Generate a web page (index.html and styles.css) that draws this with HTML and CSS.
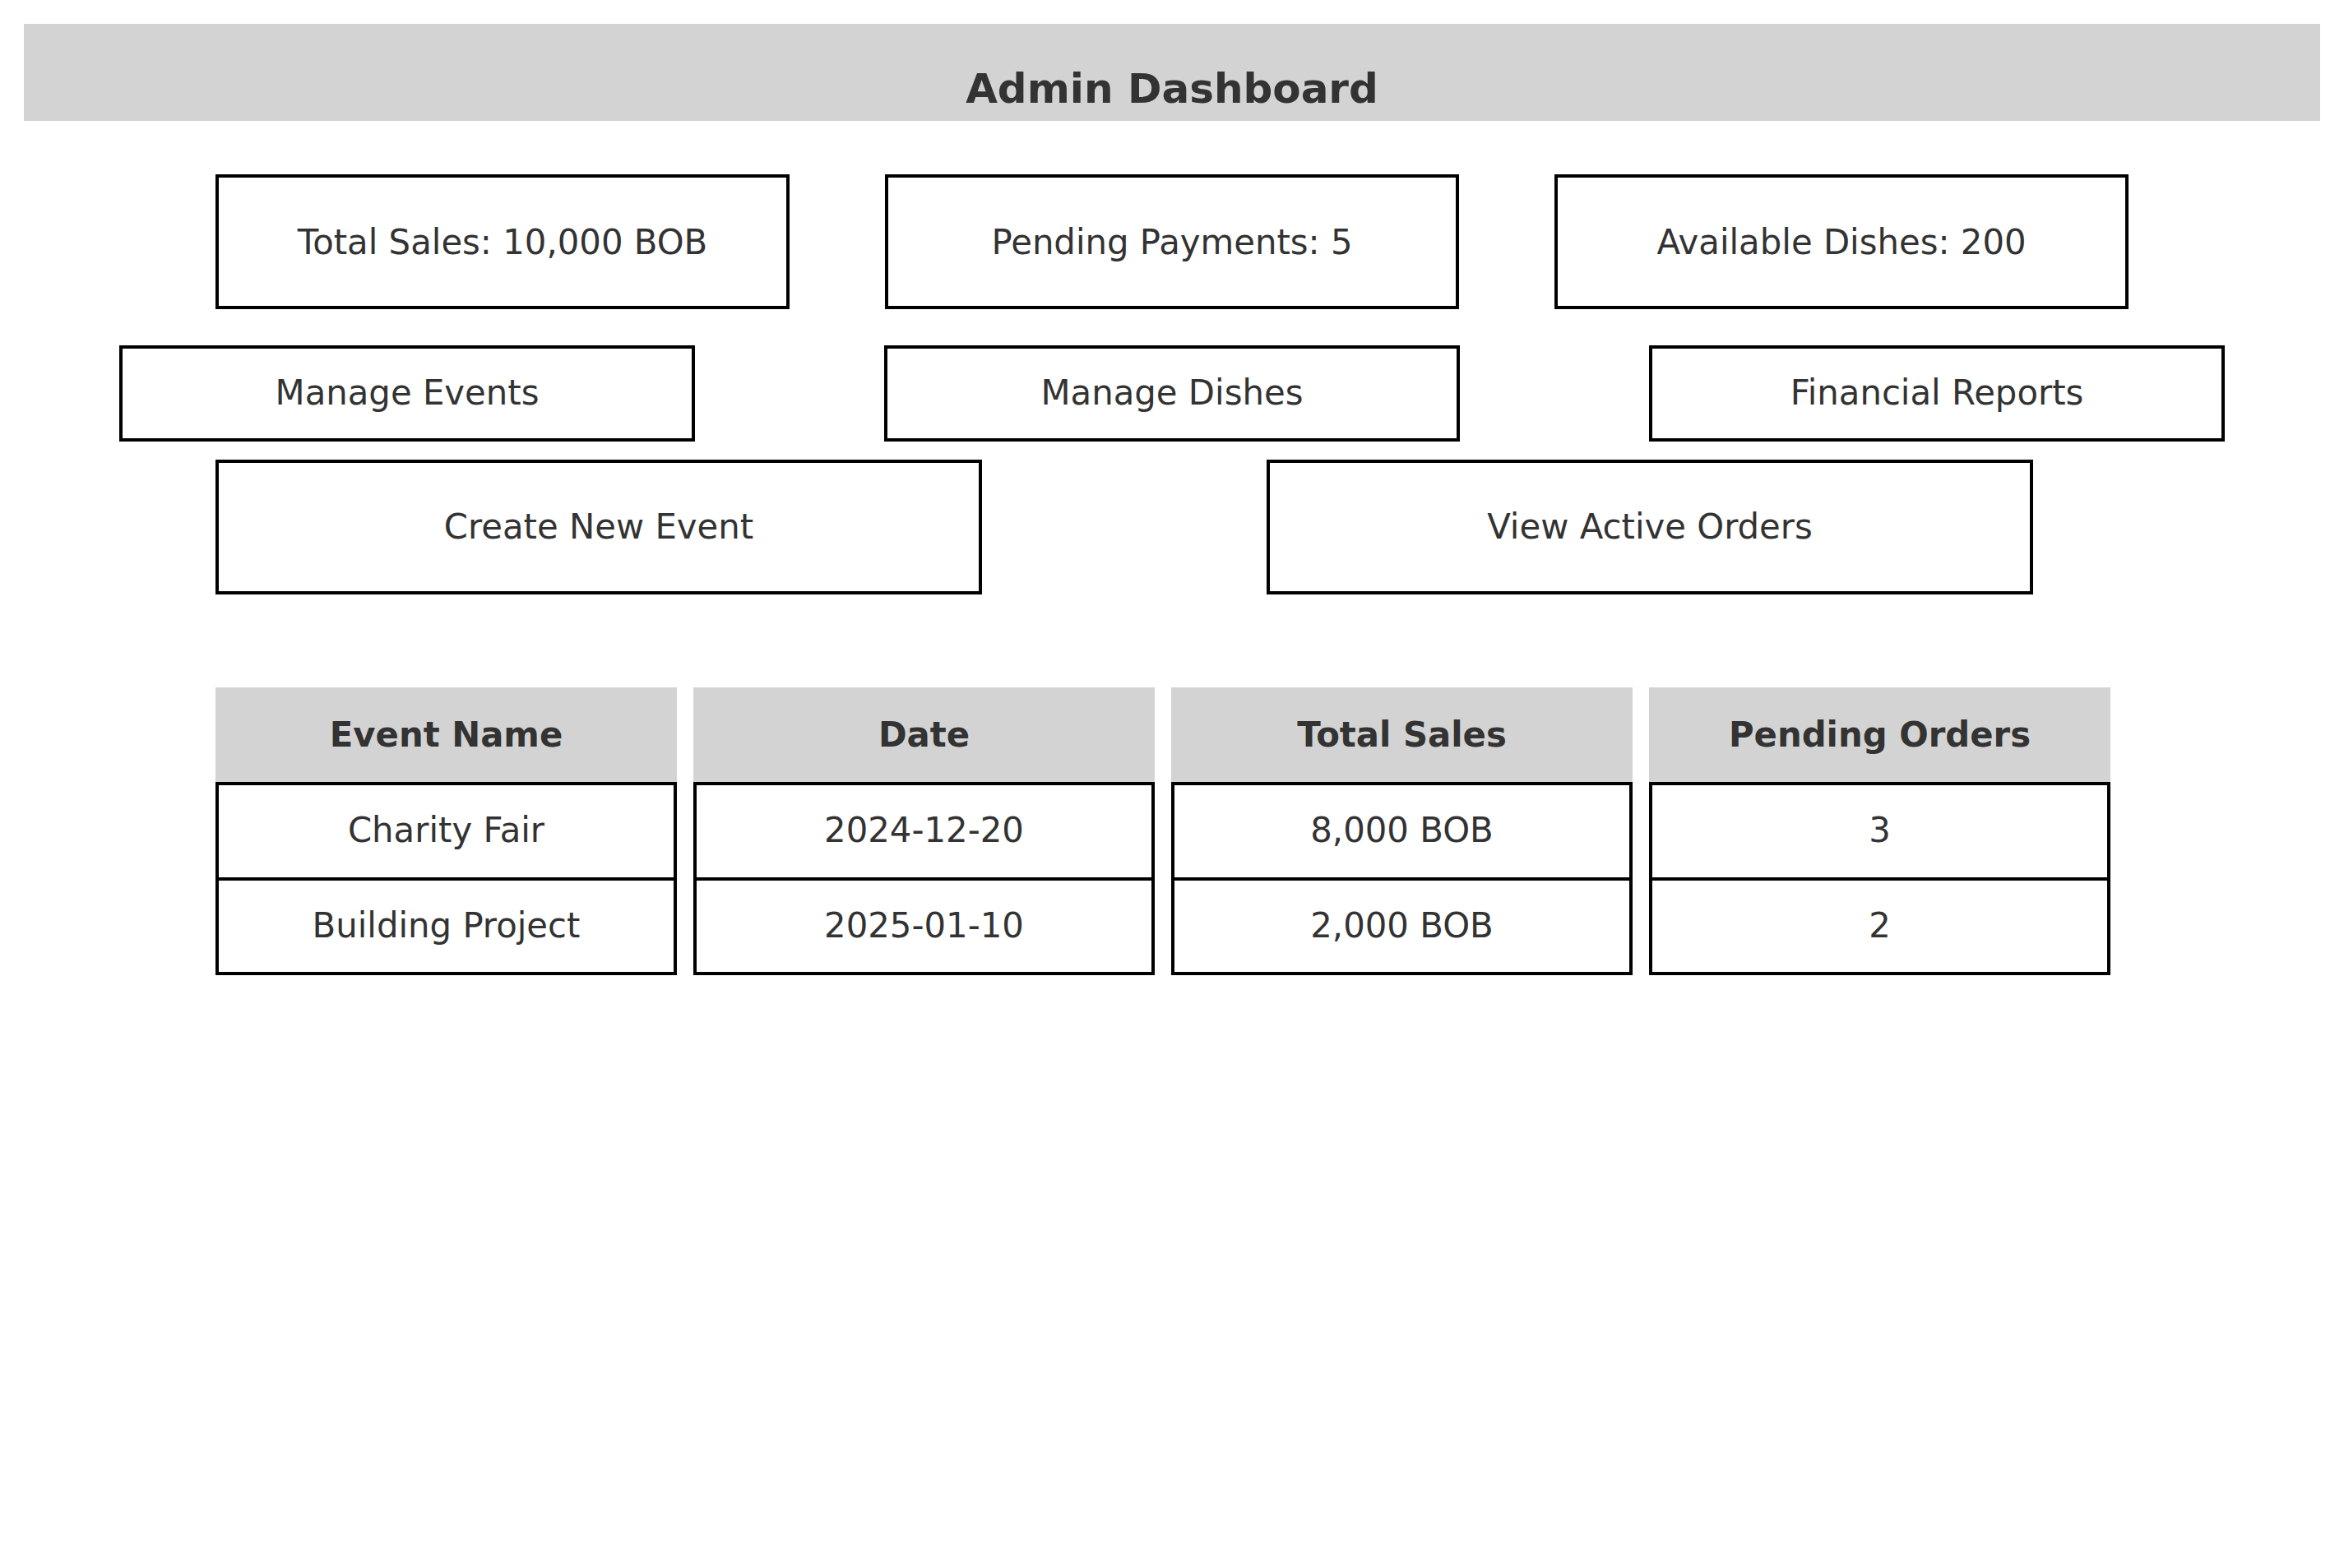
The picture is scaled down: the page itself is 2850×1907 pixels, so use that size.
FILE: index.html
```html
<!DOCTYPE html>
<html lang="en">
<head>
<meta charset="utf-8">
<title>Admin Dashboard</title>
<link rel="stylesheet" href="styles.css">
</head>
<body>
<header class="topbar">
  <h1 class="title">Admin Dashboard</h1>
</header>
<main class="content">
  <section class="stats">
    <div class="stat">Total Sales: 10,000 BOB</div>
    <div class="stat">Pending Payments: 5</div>
    <div class="stat">Available Dishes: 200</div>
  </section>
  <nav class="nav-row">
    <div class="nav-btn">Manage Events</div>
    <div class="nav-btn">Manage Dishes</div>
    <div class="nav-btn">Financial Reports</div>
  </nav>
  <section class="actions">
    <div class="action">Create New Event</div>
    <div class="action">View Active Orders</div>
  </section>
  <table class="events">
    <thead>
      <tr>
        <th>Event Name</th>
        <th>Date</th>
        <th>Total Sales</th>
        <th>Pending Orders</th>
      </tr>
    </thead>
    <tbody>
      <tr>
        <td>Charity Fair</td>
        <td>2024-12-20</td>
        <td>8,000 BOB</td>
        <td>3</td>
      </tr>
      <tr>
        <td>Building Project</td>
        <td>2025-01-10</td>
        <td>2,000 BOB</td>
        <td>2</td>
      </tr>
    </tbody>
  </table>
</main>
</body>
</html>
```
FILE: styles.css
```css
* { box-sizing: border-box; }

html, body {
  background: #ffffff;
}

body {
  margin: 0;
  padding: 29px 29px 0 29px;
  font-family: "DejaVu Sans", "Liberation Sans", sans-serif;
  font-size: 41.8px;
  color: #333333;
}

.topbar {
  background: #d3d3d3;
  padding: 50px 0 10px 0;
  text-align: center;
}

.title {
  margin: 0;
  font-size: 50px;
  font-weight: bold;
  line-height: 58px;
  color: #333333;
}

.content {
  width: 2326px;
  margin: 0 auto;
}

.stats {
  display: flex;
  justify-content: space-between;
  margin-top: 65px;
}

.stat {
  width: 698px;
  height: 164px;
  border: 4px solid #000;
  display: flex;
  align-items: center;
  justify-content: center;
}

.nav-row {
  display: flex;
  justify-content: space-between;
  margin: 44px -117px 0 -117px;
}

.nav-btn {
  width: 700px;
  height: 117px;
  padding-bottom: 3px;
  border: 4px solid #000;
  display: flex;
  align-items: center;
  justify-content: center;
}

.actions {
  display: flex;
  gap: 346px;
  margin-top: 22px;
}

.action {
  width: 932px;
  height: 164px;
  padding-bottom: 2px;
  border: 4px solid #000;
  display: flex;
  align-items: center;
  justify-content: center;
}

.events {
  margin: 113px 0 0 -20px;
  border-collapse: separate;
  border-spacing: 20px 0;
  table-layout: fixed;
  width: 2344px;
}

.events th,
.events td {
  width: 561px;
  text-align: center;
  line-height: 48px;
  font-size: 41.8px;
  color: #333333;
}

.events th {
  background: #d3d3d3;
  font-weight: bold;
  padding: 33.5px 0;
  border: 0;
}

.events td {
  border: 4px solid #000;
  padding: 31px 0 33px 0;
}

.events tbody tr + tr td {
  border-top: 0;
  padding: 31px 0 32px 0;
}
```
